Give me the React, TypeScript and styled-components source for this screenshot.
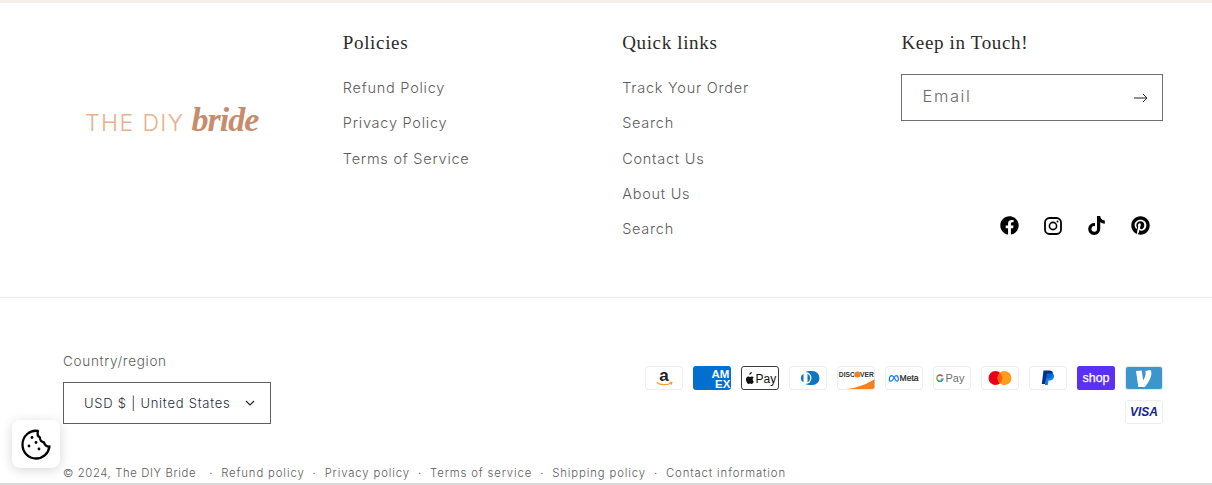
import React from 'react'
import styled, { createGlobalStyle } from 'styled-components'
import { FaFacebook, FaPinterest, FaTiktok } from 'react-icons/fa'

const GlobalStyle = createGlobalStyle`
  html, body {
    margin: 0;
    padding: 0;
    background: #fff;
    overflow: hidden;
  }
`

const Page = styled.footer`
  box-sizing: border-box;
  width: 1212px;
  height: 485px;
  overflow: hidden;
  border-top: 3px solid #f4efea;
  border-bottom: 2px solid #d9d9d9;
  font-family: 'Inter', 'Liberation Sans', sans-serif;
  font-weight: 300;
  color: #5c5c5c;
`

const TopGrid = styled.div`
  display: grid;
  grid-template-columns: repeat(4, 262px);
  column-gap: 17.33px;
  height: 295px;
  box-sizing: border-box;
  padding: 28px 49px 0 63.5px;
  border-bottom: 1px solid #ebebeb;
`

const LogoCell = styled.div`
  display: flex;
  align-items: baseline;
  padding: 70px 0 0 21.5px;
  white-space: nowrap;
`

const LogoPlain = styled.span`
  font-size: 23px;
  font-weight: 300;
  letter-spacing: 1.4px;
  color: #e8b08c;
`

const LogoScript = styled.span`
  margin-left: 7px;
  font-family: 'Liberation Serif', serif;
  font-style: italic;
  font-weight: 700;
  font-size: 34px;
  letter-spacing: -1px;
  color: #c78c6c;
`

const Heading = styled.h2<{ $gap?: number }>`
  margin: 0 0 ${p => p.$gap ?? 23}px;
  font-family: 'Liberation Serif', serif;
  font-size: 19px;
  line-height: 24px;
  font-weight: 400;
  letter-spacing: 0.65px;
  color: #2a2a2a;
`

const LinkList = styled.ul`
  display: flex;
  flex-direction: column;
  gap: 15.3px;
  margin: 0;
  padding: 0;
  list-style: none;
`

const LinkItem = styled.li`
  font-size: 14.5px;
  line-height: 20px;
  letter-spacing: 0.75px;
  white-space: nowrap;
`

const EmailBox = styled.div`
  display: flex;
  align-items: center;
  justify-content: space-between;
  box-sizing: border-box;
  width: 262px;
  height: 47px;
  padding: 0 14px 0 20px;
  border: 1px solid #6f6f6f;
  font-size: 16.5px;
  letter-spacing: 1.6px;
  color: #6a6a6a;
`

const EmailLabel = styled.span`
  margin-top: -3px;
`

const SocialRow = styled.div`
  display: flex;
  justify-content: flex-end;
  align-items: center;
  gap: 25px;
  margin-top: 95px;
  padding-right: 13px;
  color: #000;
  font-size: 19px;
  line-height: 0;
`

const BottomRow = styled.div`
  display: flex;
  justify-content: space-between;
  padding: 54px 49px 0 63px;
`

const CountryLabel = styled.div`
  font-size: 13.5px;
  line-height: 18px;
  letter-spacing: 0.7px;
  margin-bottom: 12px;
`

const CountrySelect = styled.div`
  display: flex;
  align-items: center;
  justify-content: space-between;
  box-sizing: border-box;
  width: 208px;
  height: 42px;
  padding: 0 15px 0 20px;
  border: 1px solid #5f5f5f;
  font-size: 13px;
  font-weight: 300;
  letter-spacing: 0.75px;
  color: #1f2d40;
  white-space: nowrap;
`

const PaymentList = styled.div`
  display: flex;
  flex-wrap: wrap;
  justify-content: flex-end;
  align-content: flex-start;
  gap: 10px;
  width: 518px;
  padding-top: 14px;
`

const PayCard = styled.svg`
  display: block;
  width: 38px;
  height: 24px;
`

const LegalRow = styled.div`
  display: flex;
  align-items: center;
  padding: 41px 0 0 63px;
  font-size: 11.3px;
  line-height: 16px;
  letter-spacing: 0.88px;
  white-space: nowrap;
`

const Copyright = styled.span`
  letter-spacing: 0.62px;
  margin-right: 5px;
`

const LegalSep = styled.span`
  margin: 0 8px;
`

const CookieButton = styled.button`
  position: fixed;
  left: 12px;
  top: 420px;
  display: flex;
  align-items: center;
  justify-content: center;
  width: 48px;
  height: 48px;
  padding: 0;
  border: 0;
  border-radius: 8px;
  background: #fff;
  box-shadow: 0 2px 12px rgba(0, 0, 0, 0.16);
`

const cardFrame = (
  <rect x='0.5' y='0.5' width='37' height='23' rx='2.5' fill='#fff' stroke='#eceded' />
)

function PayIcon({ label, children }: { label: string; children: React.ReactNode }) {
  return (
    <PayCard viewBox='0 0 38 24' role='img' aria-label={label}>
      {children}
    </PayCard>
  )
}

const sans = 'Liberation Sans, sans-serif'

function PaymentIcons() {
  return (
    <PaymentList>
      <PayIcon label='Amazon'>
        {cardFrame}
        <text x='19' y='15' textAnchor='middle' fontFamily={sans} fontSize='17' fontWeight='700' fill='#222'>a</text>
        <path d='M11.500 16.500c4 2.800 11 3 15 .2M24.500 16l2.400.4-.7 2.200' fill='none' stroke='#f79c34' strokeWidth='1.200' />
      </PayIcon>
      <PayIcon label='American Express'>
        <rect width='38' height='24' rx='3' fill='#006fcf' />
        <text x='18.500' y='11.500' fontFamily={sans} fontSize='11.500' fontWeight='700' fill='#fff'>AM</text>
        <text x='22' y='21.500' fontFamily={sans} fontSize='11.500' fontWeight='700' fill='#fff'>EX</text>
      </PayIcon>
      <PayIcon label='Apple Pay'>
        <rect x='0.5' y='0.5' width='37' height='23' rx='2.5' fill='#fff' stroke='#3c3c3c' />
        <path d='M9.600 8.400c.5-.6.8-1.300.7-2-.7 0-1.400.4-1.800 1-.4.4-.7 1.100-.6 1.800.6 0 1.200-.3 1.700-.8zm1.600 5.300c0-1.100.9-1.700 1-1.700-.6-.8-1.400-.9-1.700-.9-.8-.1-1.500.4-1.900.4s-1-.4-1.600-.4c-.9 0-1.600.5-2.100 1.200-.9 1.500-.2 3.700.6 4.900.4.6.9 1.200 1.500 1.200s.9-.4 1.600-.4 1 .4 1.600.4 1.100-.6 1.500-1.200c.4-.7.6-1.300.6-1.400-.1 0-1.100-.4-1.100-2.100z' fill='#111' transform='translate(.5 -.5)' />
        <text x='14.500' y='16.500' fontFamily={sans} fontSize='12' fill='#111'>Pay</text>
      </PayIcon>
      <PayIcon label='Diners Club'>
        {cardFrame}
        <path d='M20 5h3.500a7 7 0 0 1 0 14H20a7 7 0 0 1 0-14z' fill='#0f75bc' />
        <circle cx='16.500' cy='12' r='6' fill='#fff' />
        <path d='M14.500 7.800v8.400a4.600 4.600 0 0 1 0-8.400zM18.500 7.800a4.600 4.600 0 0 1 0 8.400z' fill='#0f75bc' />
      </PayIcon>
      <PayIcon label='Discover'>
        {cardFrame}
        <path d='M9 23c12-1 22-5.500 28.500-10v8a2 2 0 0 1-2 2z' fill='#f48120' />
        <text x='1.800' y='10.800' fontFamily={sans} fontSize='7' fontWeight='700' fill='#333' textLength='35' lengthAdjust='spacingAndGlyphs'>DISCOVER</text>
        <circle cx='20.500' cy='8.500' r='3' fill='#f48120' />
      </PayIcon>
      <PayIcon label='Meta'>
        {cardFrame}
        <path d='M4.300 14.500c0-2.800 1.200-4.800 2.700-4.800 2 0 3.200 5.500 5 5.500 1.200 0 1.500-1.500 1.300-2.900-.3-1.700-1.300-2.600-2.200-2.600-1.700 0-3.200 5.500-4.900 5.500-1.100 0-1.900-.5-1.900-.7z' fill='none' stroke='#0a7cff' strokeWidth='1.200' />
        <text x='14.500' y='15.400' fontFamily={sans} fontSize='8.600' fill='#222' stroke='#222' strokeWidth='.2'>Meta</text>
      </PayIcon>
      <PayIcon label='Google Pay'>
        {cardFrame}
        <path d='M9.500 10.200a3.200 3.200 0 1 0 .5 3H7.600' fill='none' stroke='#4285f4' strokeWidth='1.300' />
        <path d='M9.500 10.200A3.200 3.200 0 0 0 4.500 10.500' fill='none' stroke='#ea4335' strokeWidth='1.300' />
        <path d='M4.500 10.500a3.200 3.200 0 0 0 0 3.300' fill='none' stroke='#fbbc04' strokeWidth='1.300' />
        <path d='M4.500 13.800a3.200 3.200 0 0 0 5 .6' fill='none' stroke='#34a853' strokeWidth='1.300' />
        <text x='12.500' y='15.800' fontFamily={sans} fontSize='11' fill='#6b6f73'>Pay</text>
      </PayIcon>
      <PayIcon label='Mastercard'>
        {cardFrame}
        <circle cx='14.500' cy='12' r='7' fill='#eb001b' />
        <circle cx='23.500' cy='12' r='7' fill='#f79e1b' />
        <path d='M19 6.700a7 7 0 0 1 0 10.600 7 7 0 0 1 0-10.600z' fill='#ff5f00' />
      </PayIcon>
      <PayIcon label='PayPal'>
        {cardFrame}
        <path d='M14.500 4.500h5.800c2.800 0 4 1.500 3.500 3.900-.5 2.800-2.400 4.100-5 4.100h-1.500l-.9 5.500h-3.600z' fill='#003087' />
        <path d='M18 7.500h4.500c2 0 3 1.400 2.500 3.500-.4 2.300-2 3.500-4.200 3.500h-1.200l-.8 4.500h-2.900z' fill='#0070e0' opacity='.9' />
      </PayIcon>
      <PayIcon label='Shop Pay'>
        <rect width='38' height='24' rx='2.500' fill='#5a31f4' />
        <text x='19' y='16' textAnchor='middle' fontFamily={sans} fontSize='12.500' fontWeight='400' fill='#fff' stroke='#fff' strokeWidth='.25'>shop</text>
      </PayIcon>
      <PayIcon label='Venmo'>
        <rect x='0.500' y='0.500' width='37' height='23' rx='2.500' fill='#3d95ce' stroke='#e6e9eb' />
        <path d='M25.500 4c.6 1 .9 2.100.9 3.400 0 4.200-3.600 9.700-6.500 13.600h-6.600L11 5l5.800-.6 1.300 10.200c1.200-1.900 2.600-4.900 2.600-7 0-1.100-.2-1.900-.5-2.500z' fill='#fff' />
      </PayIcon>
      <PayIcon label='Visa'>
        {cardFrame}
        <text x='19' y='16.400' textAnchor='middle' fontFamily={sans} fontSize='12' fontStyle='italic' fontWeight='700' fill='#142688'>VISA</text>
      </PayIcon>
    </PaymentList>
  )
}

function InstagramIcon() {
  return (
    <svg width='18' height='18' viewBox='0 0 18 18' fill='none' stroke='#000'>
      <rect x='1' y='1' width='16' height='16' rx='4.500' strokeWidth='1.800' />
      <circle cx='9' cy='9' r='3.600' strokeWidth='1.600' />
      <circle cx='13.500' cy='4.500' r='1' fill='#000' stroke='none' />
    </svg>
  )
}

function CookieIcon() {
  return (
    <svg width='32' height='32' viewBox='0 0 32 32' fill='none'>
      <path
        d='M18 3C10 1.500 2.500 8 2.500 16.500C2.500 24.500 8.500 30.500 16 30.500C23 30.500 28.500 25.500 29.500 18.500C27 19 24.500 17 24 14.500C21.500 14 19.500 12 20 9.500C18 8.500 17 6 18 3Z'
        stroke='#000'
        strokeWidth='2.300'
        strokeLinejoin='round'
      />
      <circle cx='12' cy='9.500' r='1.400' fill='#000' />
      <circle cx='16' cy='14.500' r='1.400' fill='#000' />
      <circle cx='9' cy='18' r='1.400' fill='#000' />
      <circle cx='19' cy='21' r='1.400' fill='#000' />
    </svg>
  )
}

const policies = ['Refund Policy', 'Privacy Policy', 'Terms of Service']
const quickLinks = ['Track Your Order', 'Search', 'Contact Us', 'About Us', 'Search']
const legal = ['Refund policy', 'Privacy policy', 'Terms of service', 'Shipping policy', 'Contact information']

export default function App() {
  return (
    <Page>
      <GlobalStyle />
      <TopGrid>
        <LogoCell>
          <LogoPlain>THE DIY</LogoPlain>
          <LogoScript>bride</LogoScript>
        </LogoCell>
        <div>
          <Heading>Policies</Heading>
          <LinkList>
            {policies.map(item => (
              <LinkItem key={item}>{item}</LinkItem>
            ))}
          </LinkList>
        </div>
        <div>
          <Heading>Quick links</Heading>
          <LinkList>
            {quickLinks.map((item, i) => (
              <LinkItem key={i}>{item}</LinkItem>
            ))}
          </LinkList>
        </div>
        <div>
          <Heading $gap={19}>Keep in Touch!</Heading>
          <EmailBox>
            <EmailLabel>Email</EmailLabel>
            <svg width='14' height='10' viewBox='0 0 14 10' fill='none' stroke='#222' strokeWidth='1'>
              <path d='M0 5h13M9 1l4 4-4 4' />
            </svg>
          </EmailBox>
          <SocialRow>
            <FaFacebook />
            <InstagramIcon />
            <FaTiktok />
            <FaPinterest />
          </SocialRow>
        </div>
      </TopGrid>
      <BottomRow>
        <div>
          <CountryLabel>Country/region</CountryLabel>
          <CountrySelect>
            USD $ | United States
            <svg width='10' height='6' viewBox='0 0 10 6' fill='none' stroke='#222' strokeWidth='1.100'>
              <path d='M1 1l4 4 4-4' />
            </svg>
          </CountrySelect>
        </div>
        <PaymentIcons />
      </BottomRow>
      <LegalRow>
        <Copyright>© 2024, The DIY Bride</Copyright>
        <LegalSep>·</LegalSep>
        {legal.map((item, i) => (
          <React.Fragment key={item}>
            {i > 0 && <LegalSep>·</LegalSep>}
            {item}
          </React.Fragment>
        ))}
      </LegalRow>
      <CookieButton aria-label='Cookie preferences'>
        <CookieIcon />
      </CookieButton>
    </Page>
  )
}
